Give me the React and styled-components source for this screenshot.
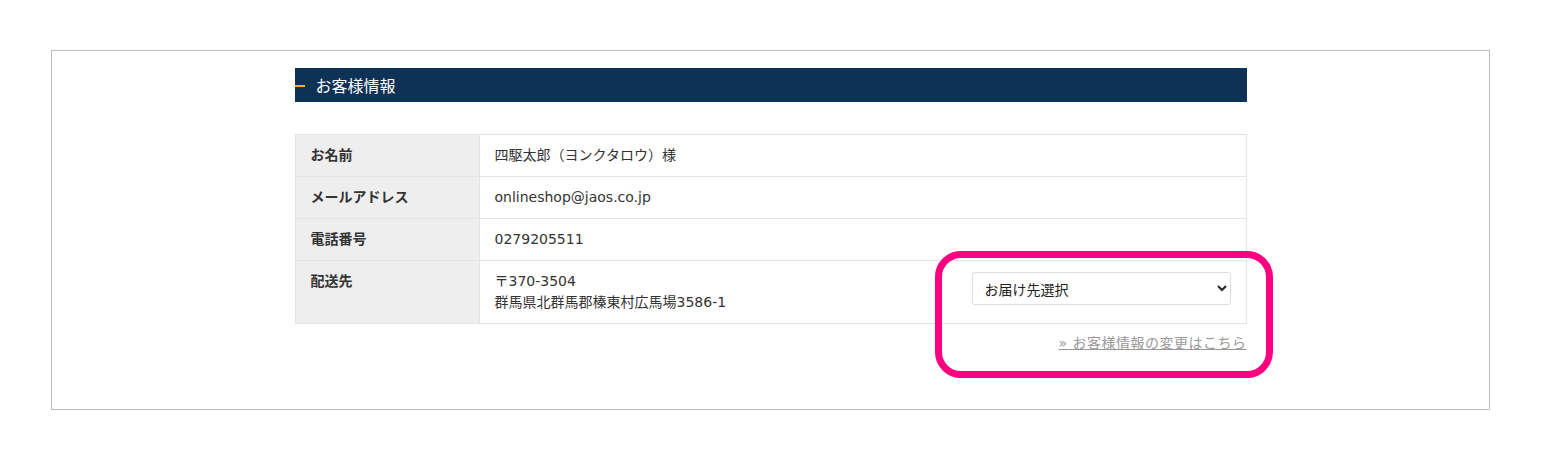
import React from 'react'
import styled, { createGlobalStyle } from 'styled-components'

const GlobalStyle = createGlobalStyle`
    body{
        margin:0;
        background:#fff;
        font-family:"DejaVu Sans","Noto Sans CJK JP",sans-serif;
        color:#333;
    }
`;

const rows = [
    { label: 'お名前', value: ['四駆太郎（ヨンクタロウ）様'] },
    { label: 'メールアドレス', value: ['onlineshop@jaos.co.jp'] },
    { label: '電話番号', value: ['0279205511'] },
]

const App = () => {
    return (
        <>
            <GlobalStyle />
            <Page>
                <Frame>
                    <Content>
                        <Heading>お客様情報</Heading>
                        <InfoTable>
                            <tbody>
                                {rows.map(r => (
                                    <tr key={r.label}>
                                        <Label>{r.label}</Label>
                                        <Value>{r.value}</Value>
                                    </tr>
                                ))}
                                <tr>
                                    <Label>配送先</Label>
                                    <Value>
                                        <AddressRow>
                                            <div>
                                                〒370-3504<br />
                                                群馬県北群馬郡榛東村広馬場3586-1
                                            </div>
                                            <Select defaultValue="">
                                                <option value="">お届け先選択</option>
                                            </Select>
                                        </AddressRow>
                                    </Value>
                                </tr>
                            </tbody>
                        </InfoTable>
                        <LinkRow>
                            <a href="#">» お客様情報の変更はこちら</a>
                        </LinkRow>
                        <Highlight />
                    </Content>
                </Frame>
            </Page>
        </>
    )
}

const Page = styled.div`
    padding:50px 51px;
`;
const Frame = styled.div`
    border:1px solid #bdbdbd;
    padding-top:17px;
    box-sizing:border-box;
    height:360px;
`;
const Content = styled.div`
    position:relative;
    width:952px;
    margin:0 auto;
`;
const Heading = styled.h2`
    position:relative;
    margin:0;
    height:34px;
    background:#0e3156;
    color:#fff;
    font-family:"Noto Sans CJK JP",sans-serif;
    font-size:16px;
    font-weight:normal;
    line-height:34px;
    padding-left:21px;
    &::before{
        content:'';
        position:absolute;
        left:0;
        top:17px;
        width:10px;
        height:2px;
        background:#f5b400;
    }
`;
const InfoTable = styled.table`
    width:100%;
    margin-top:32px;
    border-collapse:collapse;
    font-size:14px;
    td{
        border:1px solid #e3e3e3;
        vertical-align:top;
        line-height:21px;
        height:21px;
    }
`;
const Label = styled.td`
    width:152px;
    background:#eee;
    font-weight:bold;
    padding:10px 16px 10px 15px;
`;
const Value = styled.td`
    padding:10px 15px;
`;
const AddressRow = styled.div`
    display:flex;
    justify-content:space-between;
    align-items:flex-start;
`;
const Select = styled.select`
    display:block;
    width:259px;
    height:33px;
    margin-top:1px;
    border:1px solid #ddd;
    border-radius:3px;
    background:#fff;
    font-family:"Noto Sans CJK JP",sans-serif;
    font-size:14px;
    color:#222;
    padding:0 8px;
`;
const LinkRow = styled.div`
    text-align:right;
    margin-top:8px;
    font-size:14px;
    letter-spacing:0.5px;
    a{
        color:#999;
        text-decoration:underline;
    }
`;
const Highlight = styled.div`
    position:absolute;
    right:-26px;
    top:183px;
    width:338px;
    height:127px;
    box-sizing:border-box;
    border:7px solid #ff0080;
    border-radius:26px;
    pointer-events:none;
`;

export default App
